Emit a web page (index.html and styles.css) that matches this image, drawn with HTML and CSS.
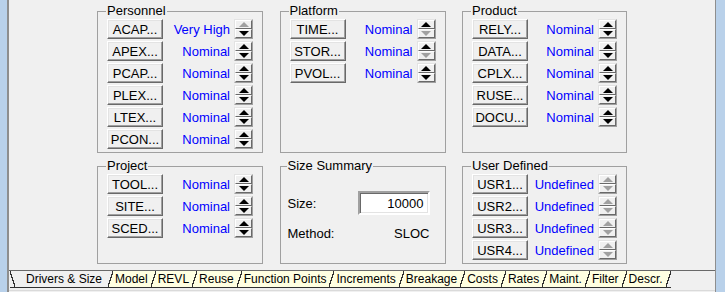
FILE: index.html
```html
<!DOCTYPE html>
<html lang="en">
<head>
    <meta charset="UTF-8">
    <title>Drivers &amp; Size</title>
    <link rel="stylesheet" href="styles.css">
</head>
<body>
    <div class="window">
        <div class="client">
            <div class="groups">
                <!-- Personnel -->
                <fieldset class="group">
                    <legend>Personnel</legend>
                    <div class="row"><button class="btn">ACAP...</button><span class="val">Very High</span><div class="spin"><span class="up off"></span><span class="dn"></span></div></div>
                    <div class="row"><button class="btn">APEX...</button><span class="val">Nominal</span><div class="spin"><span class="up"></span><span class="dn"></span></div></div>
                    <div class="row"><button class="btn">PCAP...</button><span class="val">Nominal</span><div class="spin"><span class="up"></span><span class="dn"></span></div></div>
                    <div class="row"><button class="btn">PLEX...</button><span class="val">Nominal</span><div class="spin"><span class="up"></span><span class="dn"></span></div></div>
                    <div class="row"><button class="btn">LTEX...</button><span class="val">Nominal</span><div class="spin"><span class="up"></span><span class="dn"></span></div></div>
                    <div class="row"><button class="btn">PCON...</button><span class="val">Nominal</span><div class="spin"><span class="up"></span><span class="dn"></span></div></div>
                </fieldset>

                <!-- Platform -->
                <fieldset class="group">
                    <legend>Platform</legend>
                    <div class="row"><button class="btn">TIME...</button><span class="val">Nominal</span><div class="spin"><span class="up"></span><span class="dn off"></span></div></div>
                    <div class="row"><button class="btn">STOR...</button><span class="val">Nominal</span><div class="spin"><span class="up"></span><span class="dn off"></span></div></div>
                    <div class="row"><button class="btn">PVOL...</button><span class="val">Nominal</span><div class="spin"><span class="up"></span><span class="dn"></span></div></div>
                </fieldset>

                <!-- Product -->
                <fieldset class="group">
                    <legend>Product</legend>
                    <div class="row"><button class="btn">RELY...</button><span class="val">Nominal</span><div class="spin"><span class="up"></span><span class="dn"></span></div></div>
                    <div class="row"><button class="btn">DATA...</button><span class="val">Nominal</span><div class="spin"><span class="up"></span><span class="dn"></span></div></div>
                    <div class="row"><button class="btn">CPLX...</button><span class="val">Nominal</span><div class="spin"><span class="up"></span><span class="dn"></span></div></div>
                    <div class="row"><button class="btn">RUSE...</button><span class="val">Nominal</span><div class="spin"><span class="up"></span><span class="dn"></span></div></div>
                    <div class="row"><button class="btn">DOCU...</button><span class="val">Nominal</span><div class="spin"><span class="up"></span><span class="dn"></span></div></div>
                </fieldset>

                <!-- Project -->
                <fieldset class="group">
                    <legend>Project</legend>
                    <div class="row"><button class="btn">TOOL...</button><span class="val">Nominal</span><div class="spin"><span class="up"></span><span class="dn"></span></div></div>
                    <div class="row"><button class="btn">SITE...</button><span class="val">Nominal</span><div class="spin"><span class="up"></span><span class="dn"></span></div></div>
                    <div class="row"><button class="btn">SCED...</button><span class="val">Nominal</span><div class="spin"><span class="up"></span><span class="dn"></span></div></div>
                </fieldset>

                <!-- Size Summary -->
                <fieldset class="group size">
                    <legend>Size Summary</legend>
                    <div class="size-row"><span>Size:</span><input class="size-input" type="text" value="10000"></div>
                    <div class="method-row"><span>Method:</span><span>SLOC</span></div>
                </fieldset>

                <!-- User Defined -->
                <fieldset class="group">
                    <legend>User Defined</legend>
                    <div class="row"><button class="btn">USR1...</button><span class="val">Undefined</span><div class="spin"><span class="up off"></span><span class="dn off"></span></div></div>
                    <div class="row"><button class="btn">USR2...</button><span class="val">Undefined</span><div class="spin"><span class="up off"></span><span class="dn off"></span></div></div>
                    <div class="row"><button class="btn">USR3...</button><span class="val">Undefined</span><div class="spin"><span class="up off"></span><span class="dn off"></span></div></div>
                    <div class="row"><button class="btn">USR4...</button><span class="val">Undefined</span><div class="spin"><span class="up off"></span><span class="dn off"></span></div></div>
                </fieldset>
            </div>

            <!-- シートタブ -->
            <div class="tabs">
                <div class="tab sel">Drivers &amp; Size</div>
                <div class="tab">Model</div>
                <div class="tab">REVL</div>
                <div class="tab">Reuse</div>
                <div class="tab">Function Points</div>
                <div class="tab">Increments</div>
                <div class="tab">Breakage</div>
                <div class="tab">Costs</div>
                <div class="tab">Rates</div>
                <div class="tab">Maint.</div>
                <div class="tab">Filter</div>
                <div class="tab last">Descr.</div>
            </div>
            <div class="foot"></div>
        </div>
    </div>
</body>
</html>
```

FILE: styles.css
```css
* {
    margin: 0;
    padding: 0;
    box-sizing: border-box;
}

body {
    background-color: #b9d1ea;
    font-family: "Liberation Sans", Arial, sans-serif;
    font-size: 13px;
    color: #000000;
}

.window {
    display: flex;
    height: 292px;
    padding: 0 9px 0 7px;
}

.client {
    flex: 1;
    display: flex;
    flex-direction: column;
    padding-top: 4px;
    background-color: #f0f0f0;
    border-left: 2px solid #8e8e8e;
    border-right: 1px solid #8e8e8e;
}

/* グループ */
.groups {
    display: grid;
    grid-template-columns: 166px 166px 165px;
    column-gap: 16.5px;
    row-gap: 6px;
    padding-left: 88px;
}

.group {
    min-width: 0;
    border: 1px solid #a0a0a0;
    padding: 1px 9px 3px 9px;
}

.group legend {
    padding: 0 1px;
    margin-left: -1px;
    line-height: 14px;
}

.row {
    display: flex;
    align-items: center;
    height: 20px;
}

.row + .row {
    margin-top: 2px;
}

.btn {
    width: 56px;
    height: 20px;
    font: inherit;
    color: #000000;
    background-color: #f0f0f0;
    border: 1px solid;
    border-color: #ffffff #696969 #696969 #ffffff;
    box-shadow: inset -1px -1px #a0a0a0, inset 1px 1px #e3e3e3;
    text-align: center;
}

.val {
    flex: 1;
    text-align: right;
    color: #0000ff;
    margin-right: 4px;
    white-space: nowrap;
}

/* スピンボタン */
.spin {
    width: 19px;
    height: 20px;
    display: flex;
    flex-direction: column;
    border: 1px solid;
    border-color: #e3e3e3 #a0a0a0 #a0a0a0 #e3e3e3;
}

.spin span {
    flex: 1;
    display: flex;
    align-items: center;
    justify-content: center;
    background-color: #f0f0f0;
    border: 1px solid;
    border-color: #ffffff #696969 #696969 #ffffff;
}

.spin span::before {
    content: "";
    width: 0;
    height: 0;
    border-left: 5px solid transparent;
    border-right: 5px solid transparent;
}

.spin .up::before {
    border-bottom: 5px solid #000000;
}

.spin .dn::before {
    border-top: 5px solid #000000;
}

.spin .up.off::before {
    border-bottom-color: #a0a0a0;
}

.spin .dn.off::before {
    border-top-color: #a0a0a0;
}

/* サイズ */
.size {
    padding: 1px 15px 3px 7px;
}

.size-row {
    display: flex;
    align-items: center;
    justify-content: space-between;
    margin-top: 17px;
}

.size-input {
    width: 72px;
    height: 24px;
    font: inherit;
    text-align: right;
    padding-right: 4px;
    background-color: #ffffff;
    border: 2px solid;
    border-color: #a0a0a0 #ffffff #ffffff #a0a0a0;
    box-shadow: inset 1px 1px #696969, inset -1px -1px #e3e3e3;
    outline: none;
}

.method-row {
    display: flex;
    justify-content: space-between;
    line-height: 16px;
    margin-top: 11px;
}

/* シートタブ */
.tabs {
    display: flex;
    margin-top: 6px;
    padding-left: 1px;
    border-top: 1px solid #696969;
    font-size: 12px;
}

.tab {
    display: flex;
    height: 17px;
    line-height: 16px;
    padding-left: 2px;
    background-color: #ffffe1;
    border-bottom: 1px solid #303030;
    white-space: nowrap;
}

.tab::after {
    content: "";
    width: 5px;
    margin-left: 3px;
    background: linear-gradient(to bottom right, #ffffe1 calc(50% - 0.6px), #303030 calc(50% - 0.6px), #303030 calc(50% + 0.6px), #ffffe1 calc(50% + 0.6px));
}

.tab.last::after {
    background: linear-gradient(to bottom right, #ffffe1 calc(50% - 0.6px), #303030 calc(50% - 0.6px), #303030 calc(50% + 0.6px), #f0f0f0 calc(50% + 0.6px));
}

.tab.sel {
    padding-left: 0;
    background-color: #f0f0f0;
}

.tab.sel::before {
    content: "";
    width: 5px;
    margin-right: 11px;
    background: linear-gradient(to top right, transparent calc(50% - 0.6px), #303030 calc(50% - 0.6px), #303030 calc(50% + 0.6px), transparent calc(50% + 0.6px));
}

.tab.sel::after {
    margin-left: 6px;
    background: linear-gradient(to bottom right, #f0f0f0 calc(50% - 0.6px), #303030 calc(50% - 0.6px), #303030 calc(50% + 0.6px), #ffffe1 calc(50% + 0.6px));
}

.foot {
    margin-top: 2px;
    border-top: 1px solid #dadada;
}
```
